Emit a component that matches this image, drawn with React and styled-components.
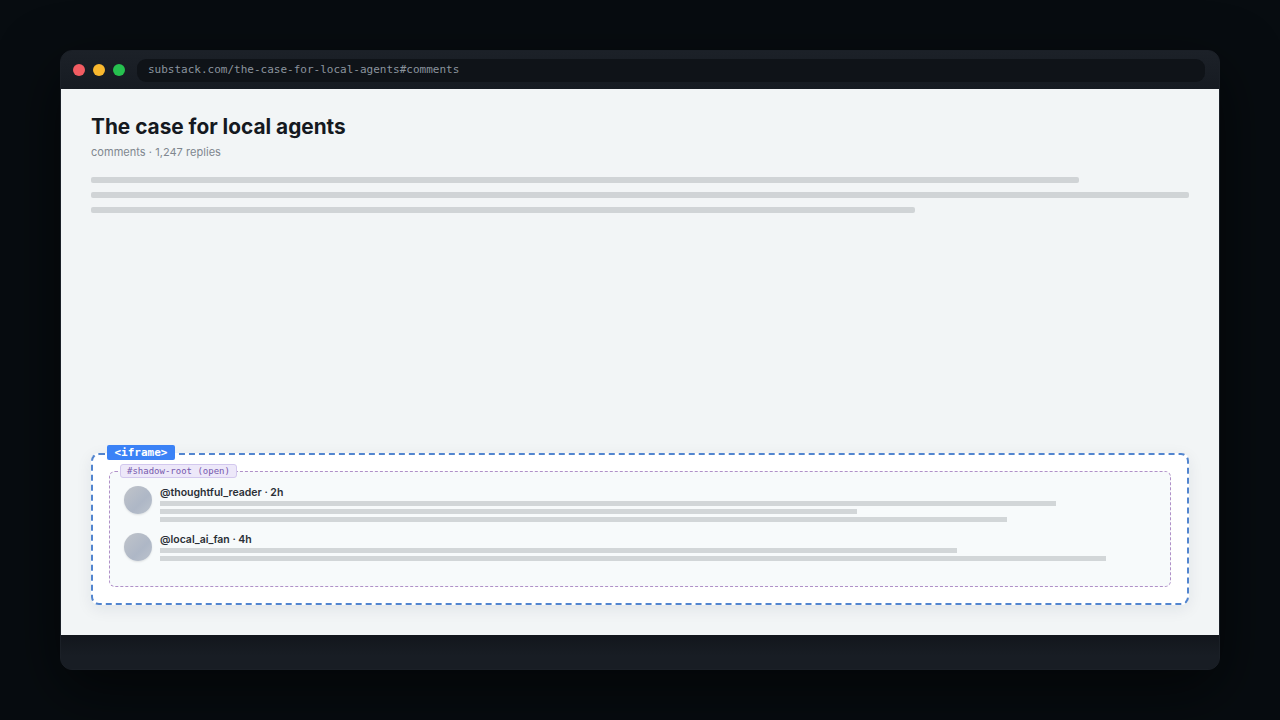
import React from "react";
import styled, { createGlobalStyle } from "styled-components";

const Global = createGlobalStyle`
  html, body { margin: 0; padding: 0; height: 100%; background: #070c10; }
  #root { height: 100%; }
  * { box-sizing: border-box; }
`;

const Stage = styled.div`
  width: 1280px;
  height: 720px;
  padding: 50px 60px;
  overflow: hidden;
  background: #070c10;
`;

const Window = styled.div`
  height: 620px;
  display: flex;
  flex-direction: column;
  border: 1px solid #1b2027;
  border-radius: 12px;
  overflow: hidden;
  background: #161b22;
  box-shadow: 0 20px 60px rgba(0, 0, 0, 0.6);
`;

const TitleBar = styled.div`
  flex: 0 0 38px;
  display: flex;
  align-items: center;
  gap: 8px;
  padding: 0 14px 0 12px;
  background: linear-gradient(180deg, #1c2128 0%, #161b22 100%);
`;

const Dot = styled.span`
  width: 12px;
  height: 12px;
  border-radius: 50%;
  background: ${(p) => p.$color};
`;

const Address = styled.div`
  flex: 1;
  height: 23px;
  margin-left: 4px;
  padding: 0 11px 2px;
  display: flex;
  align-items: center;
  border-radius: 9px;
  background: #0f1318;
  color: #8b949e;
  font: 11px/1 "DejaVu Sans Mono", monospace;
`;

const Page = styled.div`
  flex: 1;
  display: flex;
  flex-direction: column;
  padding: 24px 30px 30px;
  background: #f2f5f6;
`;

const Title = styled.h1`
  margin: 0;
  color: #15191f;
  font: 700 20.8px/27px Inter, sans-serif;
`;

const Sub = styled.div`
  margin-top: 5px;
  color: #80878f;
  font: 400 11px/14px Inter, sans-serif;
  letter-spacing: 0.04px;
`;

const Bars = styled.div`
  margin-top: 18px;
  display: flex;
  flex-direction: column;
  gap: 9px;
`;

const Bar = styled.div`
  height: 6px;
  width: ${(p) => p.$w}%;
  border-radius: 2px;
  background: #d0d4d6;
`;

const Frame = styled.section`
  position: relative;
  height: 152px;
  margin-top: auto;
  padding: 16px;
  border: 2px dashed #5285cf;
  border-radius: 8px;
  background: #fff;
  box-shadow: 0 4px 16px rgba(20, 40, 70, 0.08);
`;

const FrameTag = styled.span`
  position: absolute;
  top: -10px;
  left: 14px;
  height: 15px;
  padding: 0 7.5px;
  display: flex;
  align-items: center;
  border-radius: 2px;
  background: #3b82f6;
  color: #fff;
  font: 700 11px/1 "DejaVu Sans Mono", monospace;
`;

const Shadow = styled.div`
  position: relative;
  height: 116px;
  padding: 14px;
  display: flex;
  flex-direction: column;
  gap: 11px;
  border: 1px dashed #b090c8;
  border-radius: 6px;
  background: #f7fafb;
`;

const ShadowTag = styled.span`
  position: absolute;
  top: -8px;
  left: 10px;
  height: 14px;
  padding: 0 6px;
  display: flex;
  align-items: center;
  border: 1px solid #d3c8ee;
  border-radius: 3px;
  background: #ede8f9;
  color: #7558ad;
  font: 400 9px/1 "DejaVu Sans Mono", monospace;
`;

const Comment = styled.article`
  display: flex;
  gap: 8px;
`;

const Avatar = styled.div`
  flex: 0 0 28px;
  height: 28px;
  border-radius: 50%;
  background: linear-gradient(135deg, #c0c4ca 0%, #aeb7c6 60%, #bcc3cd 100%);
  box-shadow: 0 1px 2px rgba(0, 0, 0, 0.1);
`;

const Body = styled.div`
  flex: 1;
  display: flex;
  flex-direction: column;
  gap: 3px;
`;

const Name = styled.div`
  height: 12px;
  color: #2a2f36;
  font: 600 10.5px/14px Inter, sans-serif;
`;

const Line = styled.div`
  height: 5px;
  width: ${(p) => p.$w}%;
  background: #d2d6d8;
`;

const Footer = styled.div`
  flex: 0 0 34px;
  background: linear-gradient(180deg, #12161c 0%, #181d24 60%);
`;

const comments = [
  { name: "@thoughtful_reader · 2h", lines: [90, 70, 85] },
  { name: "@local_ai_fan · 4h", lines: [80, 95] },
];

export default function App() {
  return (
    <Stage>
      <Global />
      <Window>
        <TitleBar>
          <Dot $color="#f25c62" />
          <Dot $color="#f9b82e" />
          <Dot $color="#26c14f" />
          <Address>substack.com/the-case-for-local-agents#comments</Address>
        </TitleBar>
        <Page>
          <Title>The case for local agents</Title>
          <Sub>comments · 1,247 replies</Sub>
          <Bars>
            <Bar $w={90} />
            <Bar $w={100} />
            <Bar $w={75} />
          </Bars>
          <Frame>
            <FrameTag>&lt;iframe&gt;</FrameTag>
            <Shadow>
              <ShadowTag>#shadow-root (open)</ShadowTag>
              {comments.map((c) => (
                <Comment key={c.name}>
                  <Avatar />
                  <Body>
                    <Name>{c.name}</Name>
                    {c.lines.map((w, i) => (
                      <Line key={i} $w={w} />
                    ))}
                  </Body>
                </Comment>
              ))}
            </Shadow>
          </Frame>
        </Page>
        <Footer />
      </Window>
    </Stage>
  );
}
